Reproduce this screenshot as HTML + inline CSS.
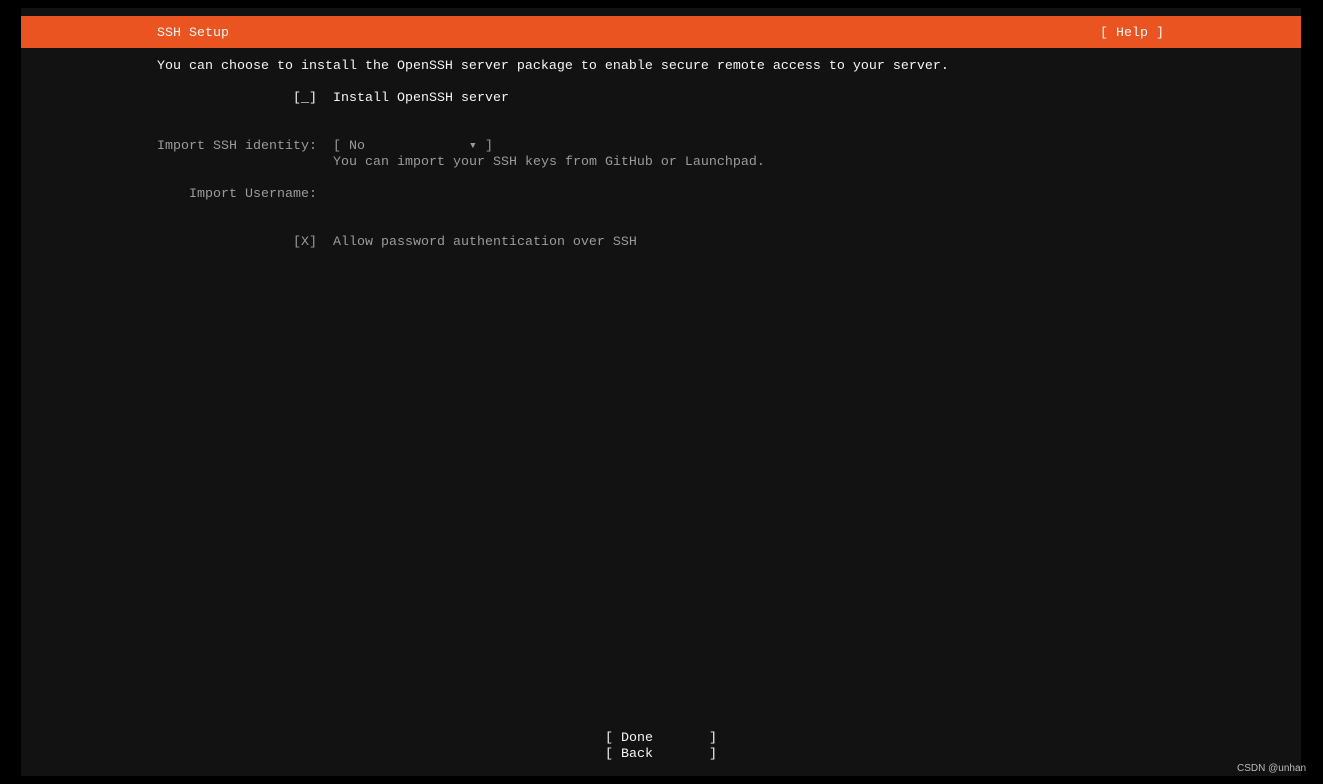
<!DOCTYPE html>
<html><head><meta charset="utf-8"><style>
html,body{margin:0;padding:0;width:1323px;height:784px;background:#000;overflow:hidden}
#t{position:absolute;left:21px;top:8px;width:1280px;height:768px;background:#121212}
#bar{position:absolute;left:21px;top:16px;width:1280px;height:32px;background:#e95420}
.l{position:absolute;font-family:"Liberation Mono","DejaVu Sans Mono",monospace;font-size:13.33px;line-height:16px;height:16px;white-space:pre;color:#f4f4f4}
.g{color:#9a9a9a}
#wm{position:absolute;left:1237px;top:763px;font-family:"Liberation Sans",sans-serif;font-size:10px;color:#bbb}
</style></head><body>
<div id="t"></div><div id="bar"></div>
<div class="l" style="left:157px;top:26px">SSH Setup</div>
<div class="l" style="left:1100px;top:26px">[ Help ]</div>
<div class="l" style="left:157px;top:59px">You can choose to install the OpenSSH server package to enable secure remote access to your server.</div>
<div class="l" style="left:293px;top:91px">[_]  Install OpenSSH server</div>
<div class="l g" style="left:157px;top:139px">Import SSH identity:  [ No             ▾ ]</div>
<div class="l g" style="left:333px;top:155px">You can import your SSH keys from GitHub or Launchpad.</div>
<div class="l g" style="left:189px;top:187px">Import Username:</div>
<div class="l g" style="left:293px;top:235px">[X]  Allow password authentication over SSH</div>
<div class="l" style="left:605px;top:731px">[ Done       ]</div>
<div class="l" style="left:605px;top:747px">[ Back       ]</div>
<div id="wm">CSDN @unhan</div>
</body></html>
